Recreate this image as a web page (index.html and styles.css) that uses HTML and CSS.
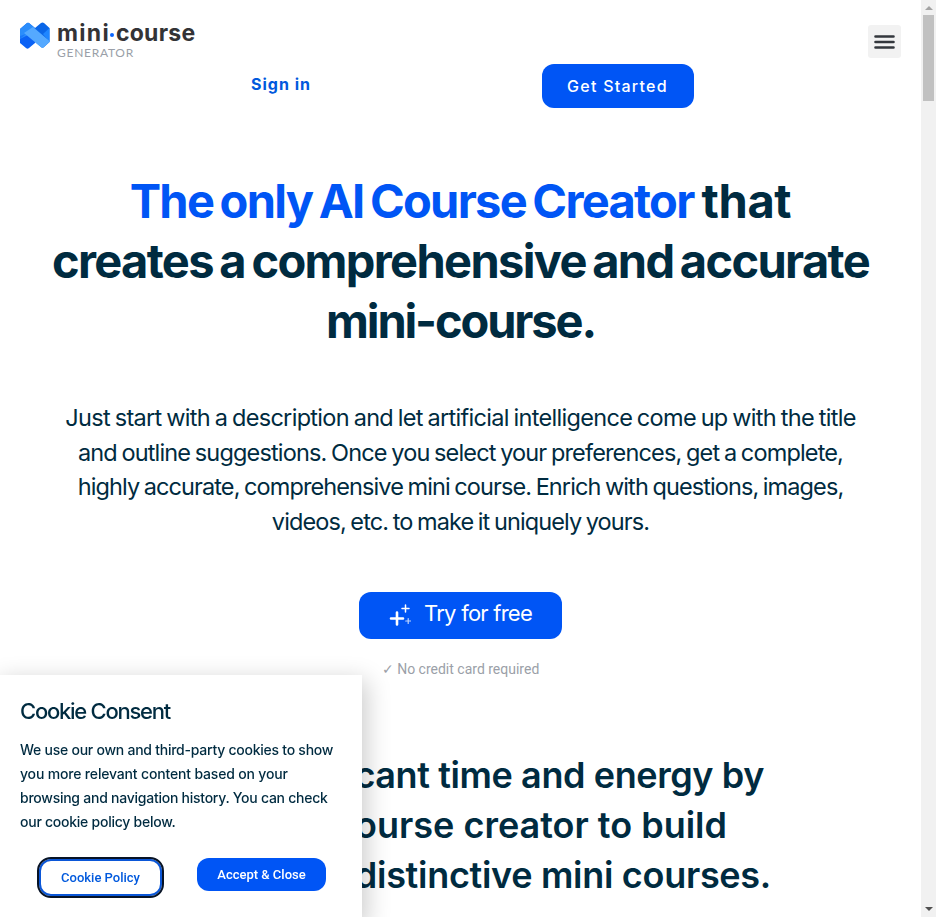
FILE: index.html
```html
<!DOCTYPE html>
<html lang="en">
<head>
<meta charset="utf-8">
<title>Mini Course Generator</title>
<link rel="stylesheet" href="styles.css">
</head>
<body>
<div class="page">
  <header class="header">
    <a class="logo">
      <svg class="logo-mark" viewBox="0 0 30 28" width="30" height="28">
        <path d="M0 7 7 1Q8 .5 9 1L15 6V21L9 26Q7.500 27.300 6 26L0 21Z" fill="#0b62f5"/>
        <path d="M15 6 21 1Q22.500 0 24 1L29.500 6V20L24 25Q22.500 26.500 21 25L15 20Z" fill="#0a66e8"/>
        <path d="M23 12 29.500 6V20Z" fill="#1f86ff"/>
        <path d="M0 7 7 1Q8 .500 9 1L15 6 8 13 0 17Z" fill="#2b8dfb"/>
        <path d="M0 14V17L6 12Z" fill="#1a78fa"/>
        <path d="M13 5 29.500 19V20L23 26H22L4 11Z" fill="#55a9ff"/>
      </svg>
      <span class="logo-text">
        <span class="logo-name"><span class="logo-mini">mini</span><i class="logo-dot"></i>course</span>
        <span class="logo-sub">GENERATOR</span>
      </span>
    </a>
    <button class="menu" aria-label="Menu">
      <svg viewBox="0 0 21 14" width="21" height="14" stroke="#33373d" stroke-width="2.600" stroke-linecap="round"><path d="M1.500 1.500H19.500M1.500 7H19.500M1.500 12.500H19.500"/></svg>
    </button>
  </header>
  <nav class="actions">
    <div class="action"><a class="sign-in">Sign in</a></div>
    <div class="action"><a class="get-started">Get Started</a></div>
  </nav>
  <main>
    <h1 class="title">
      <span class="line t1"><span class="accent">The only AI Course Creator</span> that</span>
      <span class="line t2">creates a comprehensive and accurate</span>
      <span class="line t3">mini-course.</span>
    </h1>
    <p class="lead">
      <span class="line p1">Just start with a description and let artificial intelligence come up with the title</span>
      <span class="line p2">and outline suggestions. Once you select your preferences, get a complete,</span>
      <span class="line p3">highly accurate, comprehensive mini course. Enrich with questions, images,</span>
      <span class="line p4">videos, etc. to make it uniquely yours.</span>
    </p>
    <div class="cta-row">
      <a class="cta">
        <svg class="sparkle" viewBox="0 0 22 22" width="22" height="22" fill="none" stroke="#fff" stroke-linecap="round">
          <path d="M8 8.500V20.500M2 14.500H14" stroke-width="2.600"/>
          <path d="M16.500 1V8M13 4.500H20" stroke-width="1.500"/>
          <path d="M19.200 14.500V19.500M16.700 17H21.500" stroke-width="1.200" opacity=".75"/>
        </svg>
        <span class="cta-text">Try for free</span>
      </a>
    </div>
    <p class="note">✓ No credit card required</p>
    <h2 class="subtitle">
      <span class="line s1">significant time and energy by</span>
      <span class="line s2">course creator to build</span>
      <span class="line s3">distinctive mini courses.</span>
    </h2>
  </main>
</div>
<aside class="cookie">
  <h3 class="cookie-title">Cookie Consent</h3>
  <p class="cookie-text">
    <span class="line">We use our own and third-party cookies to show</span>
    <span class="line c2">you more relevant content based on your</span>
    <span class="line">browsing and navigation history. You can check</span>
    <span class="line">our cookie policy below.</span>
  </p>
  <div class="cookie-actions">
    <button class="policy">Cookie Policy</button>
    <button class="accept">Accept &amp; Close</button>
  </div>
</aside>
<div class="scrollbar"><i class="up"></i><i class="thumb"></i><i class="down"></i></div>
</body>
</html>
```
FILE: styles.css
```css
* { box-sizing: border-box; }
body { margin: 0; height: 917px; overflow: hidden; background: #fff; color: #002b40; font-family: Inter, "Liberation Sans", sans-serif; }
h1, h2, h3, p { margin: 0; }
button { border: 0; padding: 0; }
.line { display: block; white-space: nowrap; }
.page { width: 921px; }

.header { display: flex; justify-content: space-between; height: 64px; padding: 0 20px; }
.logo { display: flex; padding-top: 22px; }
.logo-mark { margin-right: 7px; }
.logo-text { display: flex; flex-direction: column; }
.logo-name { display: flex; align-items: center; height: 22px; font-size: 23px; font-weight: 650; line-height: 22px; letter-spacing: .25px; color: #333336; }
.logo-mini { letter-spacing: 1.3px; }
.logo-dot { width: 4px; height: 4px; margin: 3px 2px 0 0; border-radius: 50%; background: #0b66ff; }
.logo-sub { font: 400 12px/14px Lato, sans-serif; letter-spacing: .72px; color: #9a9fa8; margin-top: 2px; }
.menu { display: flex; align-items: center; justify-content: center; width: 33px; height: 33px; margin-top: 25px; border-radius: 3px; background: #f2f2f2; }

.actions { display: flex; height: 112px; }
.action { width: 50%; display: flex; align-items: flex-start; }
.action:first-child { padding-left: 251px; }
.action:last-child { padding-left: 81px; }
.sign-in { font-size: 16px; font-weight: 650; line-height: 20px; letter-spacing: 1px; color: #0159dd; margin-top: 10px; }
.get-started { width: 152px; height: 44px; border-radius: 12px; background: #0055f5; color: #fff; font-size: 16px; font-weight: 500; line-height: 44px; letter-spacing: 1.25px; text-align: center; }

.title { font-size: 47px; line-height: 60px; font-weight: 700; text-align: center; word-spacing: -3px; margin-top: -5px; height: 230px; }
.accent { letter-spacing: -1.72px; color: #0055f5; }
.t1 { letter-spacing: -.3px; }
.t2 { letter-spacing: -1.66px; }
.t3 { letter-spacing: -2.13px; }
.lead { font-size: 23.5px; line-height: 34.6px; text-align: center; word-spacing: -1.2px; height: 191px; }
.p1 { letter-spacing: -.69px; }
.p2 { letter-spacing: -.84px; }
.p3 { letter-spacing: -.9px; }
.p4 { letter-spacing: -.89px; }
.cta-row { display: flex; justify-content: center; }
.cta { display: flex; width: 203px; height: 47px; padding-left: 30px; border-radius: 12px; background: #0055f5; color: #fff; }
.sparkle { margin-top: 12px; }
.cta-text { margin-left: 13px; font-size: 22px; line-height: 43px; letter-spacing: -.75px; }
.note { margin-top: 20px; font: 400 14px/20px Roboto, sans-serif; color: #9b9fa8; text-align: center; }
.subtitle { margin-top: 71px; font-size: 36px; line-height: 50px; font-weight: 600; text-align: right; }
.s1 { letter-spacing: -.4px; padding-right: 157px; }
.s2 { padding-right: 194px; }
.s3 { letter-spacing: -.3px; padding-right: 150px; }

.cookie { position: fixed; left: 0; bottom: 0; width: 362px; height: 242px; padding: 20px; background: #fff; box-shadow: 2px 8px 23px 3px rgba(0, 0, 0, .2); }
.cookie-title { font-size: 22px; font-weight: 450; line-height: 32px; letter-spacing: -1.25px; }
.cookie-text { margin-top: 11px; font-size: 14px; font-weight: 500; line-height: 24px; letter-spacing: -.25px; }
.c2 { letter-spacing: -.17px; }
.cookie-actions { display: flex; align-items: flex-start; padding: 25px 16px 0 19px; justify-content: space-between; }
.cookie-actions button { font: 500 13px/18px Roboto, sans-serif; border-radius: 12px; }
.policy { width: 123px; height: 37px; border: 2px solid #0b57d8; outline: 2px solid #071326; background: #fff; color: #0159dd; }
.accept { width: 129px; height: 33px; margin-top: -1px; background: #0055f5; color: #fff; }

.scrollbar { position: fixed; top: 0; right: 0; width: 15px; height: 917px; display: flex; flex-direction: column; align-items: center; background: #f1f1f1; }
.up { width: 0; height: 0; margin: 6px 0 5px; border: 4px solid transparent; border-top: 0; border-bottom-color: #a3a3a3; }
.thumb { width: 11px; height: 86px; background: #c1c1c1; }
.down { width: 0; height: 0; margin: auto 0 6px; border: 4px solid transparent; border-bottom: 0; border-top-color: #505050; }
```
